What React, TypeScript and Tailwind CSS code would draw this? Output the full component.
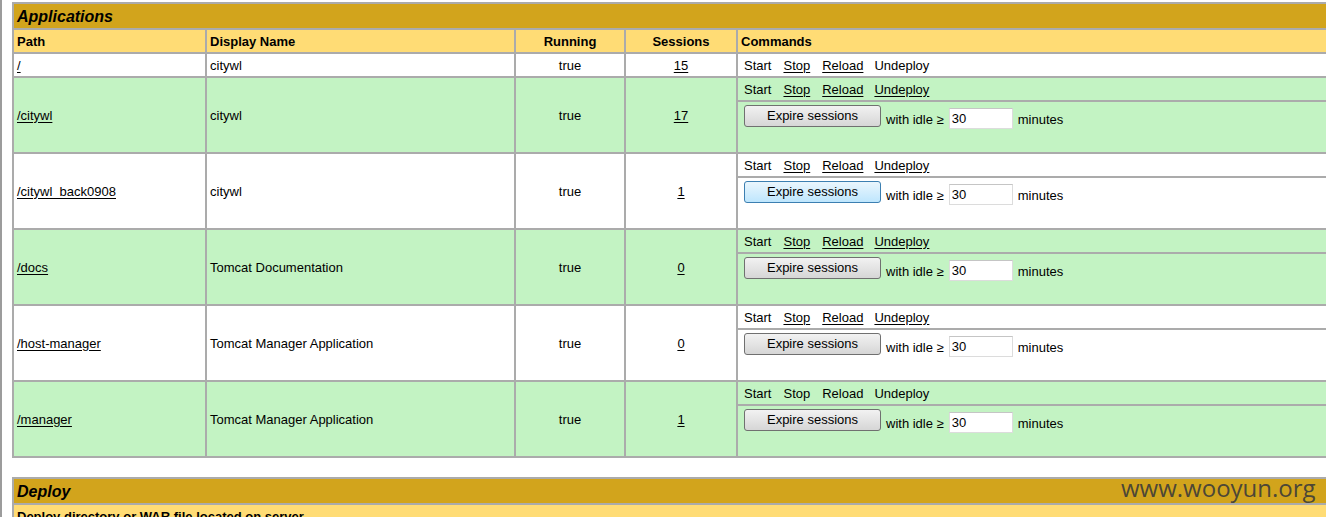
import React from 'react';

type App = {
  path: string;
  name: string;
  sessions: string;
  green: boolean;
  links: [boolean, boolean, boolean, boolean];
  expire: boolean;
  hot?: boolean;
};

const apps: App[] = [
  { path: '/', name: 'citywl', sessions: '15', green: false, links: [false, true, true, false], expire: false },
  { path: '/citywl', name: 'citywl', sessions: '17', green: true, links: [false, true, true, true], expire: true },
  { path: '/citywl_back0908', name: 'citywl', sessions: '1', green: false, links: [false, true, true, true], expire: true, hot: true },
  { path: '/docs', name: 'Tomcat Documentation', sessions: '0', green: true, links: [false, true, true, true], expire: true },
  { path: '/host-manager', name: 'Tomcat Manager Application', sessions: '0', green: false, links: [false, true, true, true], expire: true },
  { path: '/manager', name: 'Tomcat Manager Application', sessions: '1', green: true, links: [false, false, false, false], expire: true },
];

const cell = 'border border-[#ababab] px-[3px] flex items-center whitespace-nowrap';

const Cmd = ({ label, link }: { label: string; link: boolean }) =>
  link ? <a href="#" className="underline underline-offset-2">{label}</a> : <span>{label}</span>;

// spacing between command links ("&nbsp; &nbsp;" in the original page)
const Commands = ({ links }: { links: App['links'] }) => (
  <span className="flex whitespace-nowrap pl-[3px]">
    <Cmd label="Start" link={links[0]} />
    <span className="w-[12px]" />
    <Cmd label="Stop" link={links[1]} />
    <span className="w-[12px]" />
    <Cmd label="Reload" link={links[2]} />
    <span className="w-[11px]" />
    <Cmd label="Undeploy" link={links[3]} />
  </span>
);

const ExpireForm = ({ hot }: { hot?: boolean }) => (
  <div className="flex items-start pt-[3px] pl-[6px]">
    <button
      className={
        hot
          ? 'h-[22px] w-[137px] rounded-[3px] border border-[#3c7fb1] bg-gradient-to-b from-[#eaf6fd] to-[#bee6fd] text-[13px] leading-[18px] text-black'
          : 'h-[22px] w-[137px] rounded-[3px] border border-[#707070] bg-gradient-to-b from-[#f2f2f2] to-[#d6d6d6] text-[13px] leading-[18px] text-black'
      }
    >
      Expire sessions
    </button>
    <span className="ml-[5px] mt-[7px] leading-[16px]">with idle ≥</span>
    <input
      readOnly
      value="30"
      className="ml-[5px] mt-[3px] h-[21px] w-[64px] border border-[#dcdcdc] border-t-[#c5c5c5] bg-white px-[2px] text-[13px] text-black outline-none"
    />
    <span className="ml-[5px] mt-[7px] leading-[16px]">minutes</span>
  </div>
);

const AppRow = ({ app }: { app: App }) => {
  const bg = app.green ? 'bg-[#c3f3c3]' : 'bg-white';
  const h = app.expire ? 'h-[76px]' : 'h-[24px]';
  return (
    <div className={`flex ${h} ${bg}`}>
      <div className={`${cell} w-[193px] shrink-0`}>
        <a href="#" className="underline underline-offset-2">{app.path}</a>
      </div>
      <div className={`${cell} w-[309px] shrink-0`}>{app.name}</div>
      <div className={`${cell} w-[110px] shrink-0 justify-center`}>true</div>
      <div className={`${cell} w-[112px] shrink-0 justify-center`}>
        <a href="#" className="underline underline-offset-2">{app.sessions}</a>
      </div>
      <div className="flex flex-1 flex-col">
        <div className={`${cell} h-[24px] shrink-0`}>
          <Commands links={app.links} />
        </div>
        {app.expire && (
          <div className="flex-1 border border-[#ababab] whitespace-nowrap">
            <ExpireForm hot={app.hot} />
          </div>
        )}
      </div>
    </div>
  );
};

export default function App() {
  return (
    <div
      className="relative h-[517px] w-[1326px] overflow-hidden border-l-2 border-[#9c9c9c] bg-white pt-[2px] pl-[10px] text-[13px] leading-[15px] text-black"
      style={{ fontFamily: '"Liberation Sans", Arial, sans-serif' }}
    >
      {/* Applications */}
      <div className="w-[1360px] border border-[#ababab]">
        <div className={`${cell} h-[26px] bg-[#d2a41c] text-[16px] font-bold italic`}>Applications</div>
        <div className="flex h-[24px] bg-[#ffdc75] font-bold">
          <div className={`${cell} w-[193px] shrink-0`}>Path</div>
          <div className={`${cell} w-[309px] shrink-0`}>Display Name</div>
          <div className={`${cell} w-[110px] shrink-0 justify-center`}>Running</div>
          <div className={`${cell} w-[112px] shrink-0 justify-center`}>Sessions</div>
          <div className={`${cell} flex-1`}>Commands</div>
        </div>
        {apps.map((a) => (
          <AppRow key={a.path} app={a} />
        ))}
      </div>

      {/* Deploy */}
      <div className="mt-[19px] w-[1360px] border border-[#ababab]">
        <div className={`${cell} h-[26px] bg-[#d2a41c] text-[16px] font-bold italic`}>Deploy</div>
        <div className={`${cell} h-[24px] bg-[#ffdc75] font-bold`}>Deploy directory or WAR file located on server</div>
      </div>

      <div
        className="absolute left-[1119px] top-[472px] text-[24px] leading-[32px] text-[#3a3a3a]/90"
        style={{ fontFamily: '"Open Sans", sans-serif' }}
      >
        www.wooyun.org
      </div>
    </div>
  );
}
